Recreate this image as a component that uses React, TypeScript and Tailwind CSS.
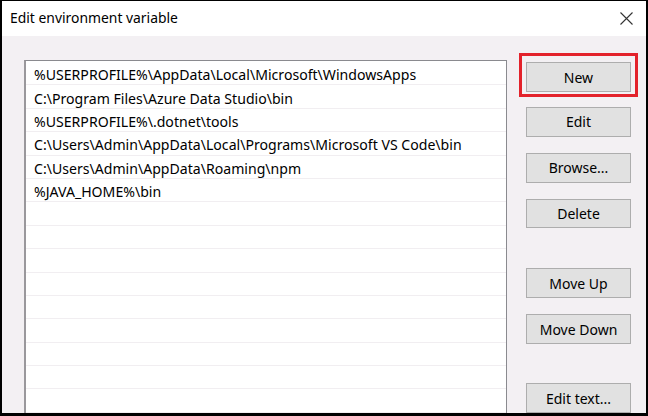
import React from 'react'

const paths = [
  '%USERPROFILE%\\AppData\\Local\\Microsoft\\WindowsApps',
  'C:\\Program Files\\Azure Data Studio\\bin',
  '%USERPROFILE%\\.dotnet\\tools',
  'C:\\Users\\Admin\\AppData\\Local\\Programs\\Microsoft VS Code\\bin',
  'C:\\Users\\Admin\\AppData\\Roaming\\npm',
  '%JAVA_HOME%\\bin',
  '', '', '', '', '', '', '', '', '', '', '', '', '', '', '',
]

const Button = ({ label, className = '' }: { label: string; className?: string }) => (
  <div
    className={`h-[30px] w-[105px] flex items-center justify-center bg-[#e1e1e1] border border-[#adadad] text-[14px] text-black ${className}`}
  >
    {label}
  </div>
)

const App = () => {
  return (
    <div
      className="w-[648px] h-[416px] bg-black pt-[1px] pl-[2px] pr-[2px] pb-[3px] flex flex-col overflow-hidden"
      style={{ fontFamily: '"Noto Sans", "Open Sans", sans-serif' }}
    >
      <div className="h-[35px] bg-white flex items-center justify-between pl-[8px] pr-[13px] shrink-0">
        <span className="text-[13.9px] text-black">Edit environment variable</span>
        <svg width="13" height="13" viewBox="0 0 13 13">
          <path d="M0.5 0.5 L12.5 12.5 M12.5 0.5 L0.5 12.5" stroke="#333" strokeWidth="1.1" fill="none" />
        </svg>
      </div>
      <div className="flex-1 bg-[#f3f0f3] flex pl-[22px] pt-[24px] overflow-hidden">
        <div className="w-[483px] h-[400px] shrink-0 bg-white border border-[#8a8a8f] border-l-2 border-l-[#9a989c] pt-px">
          {paths.map((p, i) => (
            <div
              key={i}
              className="h-[23.4px] border-b border-[#f1eef1] pl-[8px] pt-[3px] flex items-center text-[14.1px] text-black whitespace-nowrap"
            >
              {p}
            </div>
          ))}
        </div>
        <div className="flex flex-col ml-[19px] pt-[2px]">
          <div className="relative">
            <Button label="New" />
            <div className="absolute -left-[7px] -top-[9px] w-[119px] h-[44px] border-[3px] border-[#e3222b]" />
          </div>
          <Button label="Edit" className="mt-[15px]" />
          <Button label="Browse..." className="mt-[16px]" />
          <Button label="Delete" className="mt-[16px]" />
          <Button label="Move Up" className="mt-[40px]" />
          <Button label="Move Down" className="mt-[16px]" />
          <Button label="Edit text..." className="mt-[39px]" />
        </div>
      </div>
    </div>
  )
}

export default App
